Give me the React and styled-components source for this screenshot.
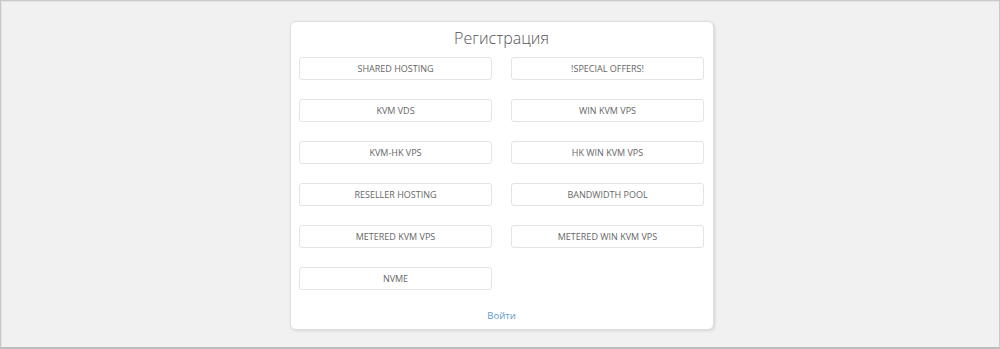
import React from 'react';
import styled, { createGlobalStyle } from 'styled-components';

const GlobalStyle = createGlobalStyle`
  html, body {
    margin: 0;
    padding: 0;
    background: #f1f1f1;
  }
  * { box-sizing: border-box; }
`;

const plans = [
  'SHARED HOSTING',
  '!SPECIAL OFFERS!',
  'KVM VDS',
  'WIN KVM VPS',
  'KVM-HK VPS',
  'HK WIN KVM VPS',
  'RESELLER HOSTING',
  'BANDWIDTH POOL',
  'METERED KVM VPS',
  'METERED WIN KVM VPS',
  'NVME',
];

const App = () => {
  return (
    <Frame>
      <GlobalStyle />
      <Card>
        <Title>Регистрация</Title>
        <Grid>
          {plans.map((p) => (
            <PlanButton key={p} href="#">{p}</PlanButton>
          ))}
        </Grid>
        <Footer>
          <LoginLink href="#">Войти</LoginLink>
        </Footer>
      </Card>
    </Frame>
  );
};

const Frame = styled.div`
  width: 1000px;
  height: 349px;
  border: 1px solid #c9c9c9;
  border-bottom: 2px solid #bdbdbd;
  box-shadow: inset 1px 1px 0 #e4e4e4;
  background: #f1f1f1;
  display: flex;
  justify-content: center;
  padding: 20px 0 0 4px;
  font-family: "Open Sans", "Liberation Sans", sans-serif;
`;

const Card = styled.div`
  width: 424px;
  height: 309px;
  background: #fff;
  border: 1px solid #dedede;
  border-radius: 6px;
  box-shadow: 1px 1px 3px rgba(0, 0, 0, 0.12);
  padding: 5px 9px 0 8px;
  display: flex;
  flex-direction: column;
`;

const Title = styled.h1`
  margin: 0;
  font-size: 16px;
  font-weight: 300;
  color: #555;
  text-align: center;
  line-height: 22px;
  height: 30px;
`;

const Grid = styled.div`
  display: grid;
  grid-template-columns: 193px 193px;
  column-gap: 19px;
  row-gap: 19px;
`;

const PlanButton = styled.a`
  display: flex;
  align-items: center;
  justify-content: center;
  height: 23px;
  border: 1px solid #e3e3e3;
  border-radius: 3px;
  background: #fff;
  color: #666;
  font-size: 9px;
  text-decoration: none;
`;

const Footer = styled.div`
  text-align: center;
  margin-top: 12px;
`;

const LoginLink = styled.a`
  color: #5d96cf;
  font-size: 9.5px;
  text-decoration: none;
`;

export default App;
